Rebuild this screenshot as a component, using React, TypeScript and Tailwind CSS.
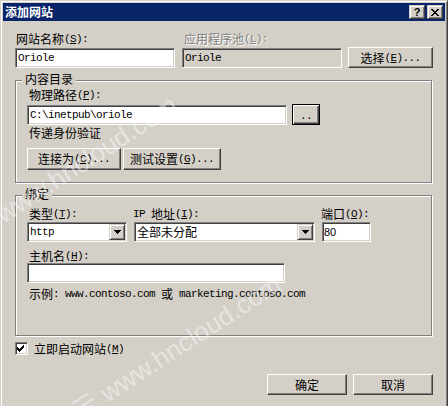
import type { ReactNode } from "react"

const mono = "[font-family:'Liberation_Mono',monospace] text-[11px] tracking-[-0.6px]"
const raised =
  "flex items-center justify-center bg-[#d4d0c8] border border-t-white border-l-white border-r-[#404040] border-b-[#404040] shadow-[inset_-1px_-1px_#808080]"
const smallRaised =
  "bg-[#d4d0c8] border border-t-[#d4d0c8] border-l-[#d4d0c8] border-r-[#404040] border-b-[#404040] shadow-[inset_1px_1px_#fff,inset_-1px_-1px_#808080]"
const line = "flex h-[12px] items-center whitespace-nowrap"

function M({ children }: { children: ReactNode }) {
  return <span className={mono}>{children}</span>
}

// accelerator key, e.g. (S):
function Key({ k, tail = ":" }: { k: string; tail?: string }) {
  return (
    <M>
      (<u>{k}</u>){tail}
    </M>
  )
}

function Btn({ className = "", children }: { className?: string; children: ReactNode }) {
  return (
    <button type="button" className={`${raised} ${className}`}>
      <span className={line}>{children}</span>
    </button>
  )
}

function Field({ className = "", children }: { className?: string; children?: ReactNode }) {
  return (
    <div
      className={`flex items-center border border-[#808080] border-r-white border-b-white p-px shadow-[inset_1px_1px_#404040,inset_-1px_-1px_#d4d0c8] ${className}`}
    >
      {children}
    </div>
  )
}

function Pixels({ w, h, rows }: { w: number; h: number; rows: number[][] }) {
  return (
    <svg width={w} height={h} viewBox={`0 0 ${w} ${h}`} shapeRendering="crispEdges">
      {rows.map((r, y) =>
        r.map((v, i) =>
          i % 2 === 0 ? <rect key={`${y}-${i}`} x={v} y={y} width={r[i + 1]} height={1} fill="#000" /> : null
        )
      )}
    </svg>
  )
}

const ARROW = [[0, 7], [1, 5], [2, 3], [3, 1]]
const CROSS = [[0, 2, 6, 2], [1, 2, 5, 2], [2, 4], [3, 2], [2, 4], [1, 2, 5, 2], [0, 2, 6, 2]]
const CHECK = [[6, 1], [5, 2], [0, 1, 4, 3], [0, 2, 3, 3], [0, 5], [1, 3], [2, 1]]

function Combo({ className = "", children }: { className?: string; children: ReactNode }) {
  return (
    <Field className={`h-[20px] bg-white ${className}`}>
      <div className={`flex-1 pl-px ${line}`}>{children}</div>
      <div className={`flex h-[16px] w-[16px] items-center justify-center ${smallRaised}`}>
        <Pixels w={7} h={4} rows={ARROW} />
      </div>
    </Field>
  )
}

function Group({ title, className = "", children }: { title: string; className?: string; children: ReactNode }) {
  return (
    <div className={`relative w-[417px] border border-[#808080] shadow-[inset_1px_1px_#fff,1px_1px_#fff] ${className}`}>
      <span className="absolute left-[6px] top-[-8px] h-[12px] bg-[#d4d0c8] px-[3px] leading-[12px]">{title}</span>
      {children}
    </div>
  )
}

const mark =
  "pointer-events-none absolute origin-top-left -rotate-[33deg] whitespace-nowrap text-[26px] leading-none text-white/45 [font-family:'Liberation_Sans','Noto_Sans_CJK_SC',sans-serif]"

export default function App() {
  return (
    <div className="relative h-[406px] w-[448px] overflow-hidden bg-[#d4d0c8] text-[12px] leading-[12px] text-black [font-family:'Noto_Sans_CJK_SC',sans-serif]">
      <div className="h-full border border-b-0 border-l-[#d4d0c8] border-t-[#d4d0c8] border-r-[#404040] p-[2px] pb-0 shadow-[inset_1px_1px_#fff,inset_-1px_0_#808080]">
        {/* title bar */}
        <div className="flex h-[18px] items-center justify-between bg-[#0a246a] px-[2px]">
          <span className="font-bold text-white">添加网站</span>
          <div className="flex gap-[2px]">
            <div className={`flex h-[14px] w-[16px] items-center justify-center text-[11px] font-bold [font-family:'Liberation_Sans',sans-serif] ${smallRaised}`}>
              ?
            </div>
            <div className={`flex h-[14px] w-[16px] items-center justify-center ${smallRaised}`}>
              <Pixels w={8} h={7} rows={CROSS} />
            </div>
          </div>
        </div>

        <div className="px-[12px]">
          <div className="mt-[12px] flex items-end">
            <div className="w-[160px]">
              <div className={`pl-px ${line}`}>
                网站名称<Key k="S" />
              </div>
              <Field className="mt-[3px] h-[20px] bg-white">
                <span className={`pl-px ${mono}`}>Oriole</span>
              </Field>
            </div>
            <div className="ml-[7px] w-[160px]">
              <div className={`pl-[2px] text-[#808080] [text-shadow:1px_1px_0_#fff] ${line}`}>
                应用程序池<Key k="L" />
              </div>
              <Field className="mt-[3px] h-[20px] bg-[#d4d0c8]">
                <span className={`pl-px ${mono}`}>Oriole</span>
              </Field>
            </div>
            <Btn className="ml-[6px] h-[21px] w-[85px]">
              选择<Key k="E" tail="..." />
            </Btn>
          </div>

          <Group title="内容目录" className="mt-[12px] pb-[12px] pl-[11px] pt-[8px]">
            <div className={`pl-[2px] ${line}`}>
              物理路径<Key k="P" />
            </div>
            <div className="mt-[3px] flex items-end">
              <Field className="h-[20px] w-[260px] bg-white">
                <span className={`pl-px ${mono}`}>C:\inetpub\oriole</span>
              </Field>
              <button
                type="button"
                className="ml-[5px] flex h-[21px] w-[28px] items-end justify-center border border-black bg-[#d4d0c8] pb-[4px] shadow-[inset_1px_1px_#fff,inset_-1px_-1px_#404040,inset_-2px_-2px_#808080]"
              >
                <span className={`${mono} leading-[8px]`}>..</span>
              </button>
            </div>
            <div className={`mt-[2px] pl-[2px] ${line}`}>传递身份验证</div>
            <div className="mt-[9px] flex gap-[2px]">
              <Btn className="h-[22px] w-[94px]">
                连接为<Key k="C" tail="..." />
              </Btn>
              <Btn className="h-[22px] w-[98px]">
                测试设置<Key k="G" tail="..." />
              </Btn>
            </div>
          </Group>

          <Group title="绑定" className="mt-[12px] pb-[35px] pl-[11px] pt-[12px]">
            <div className="flex items-start">
              <div className="w-[100px]">
                <div className={`pl-[2px] ${line}`}>
                  类型<Key k="T" />
                </div>
                <Combo className="mt-[2px]">
                  <M>http</M>
                </Combo>
              </div>
              <div className="ml-[7px] w-[181px]">
                <div className={`ml-[-1px] ${line}`}>
                  <M>IP&nbsp;</M>地址<Key k="I" />
                </div>
                <Combo className="mt-[2px]">全部未分配</Combo>
              </div>
              <div className="ml-[7px] w-[49px]">
                <div className={`ml-[-1px] ${line}`}>
                  端口<Key k="O" />
                </div>
                <Field className="mt-[2px] h-[20px] bg-white">
                  <span className="text-[11px] [font-family:'Liberation_Sans',sans-serif]">80</span>
                </Field>
              </div>
            </div>
            <div className={`mt-[8px] pl-[2px] ${line}`}>
              主机名<Key k="H" />
            </div>
            <Field className="mt-px h-[20px] w-[258px] bg-white" />
            <div className={`mt-[5px] pl-[2px] ${line}`}>
              示例<M>:&nbsp;www.contoso.com&nbsp;</M>或<M>&nbsp;marketing.contoso.com</M>
            </div>
          </Group>

          <div className="mt-[6px] flex items-start">
            <Field className="h-[13px] w-[13px] bg-white pl-[1px] pt-[1px]">
              <Pixels w={7} h={7} rows={CHECK} />
            </Field>
            <div className={`ml-[6px] mt-px ${line}`}>
              立即启动网站<Key k="M" tail="" />
            </div>
          </div>

          <div className="mt-[19px] flex justify-end gap-[6px]">
            <Btn className="h-[21px] w-[80px]">确定</Btn>
            <Btn className="h-[21px] w-[80px]">取消</Btn>
          </div>
        </div>
      </div>

      {/* watermark */}
      <div className={`${mark} left-[-80px] top-[252px]`}>华纳云 www.hncloud.com</div>
      <div className={`${mark} left-[24px] top-[431px]`}>华纳云 www.hncloud.com</div>
    </div>
  )
}
